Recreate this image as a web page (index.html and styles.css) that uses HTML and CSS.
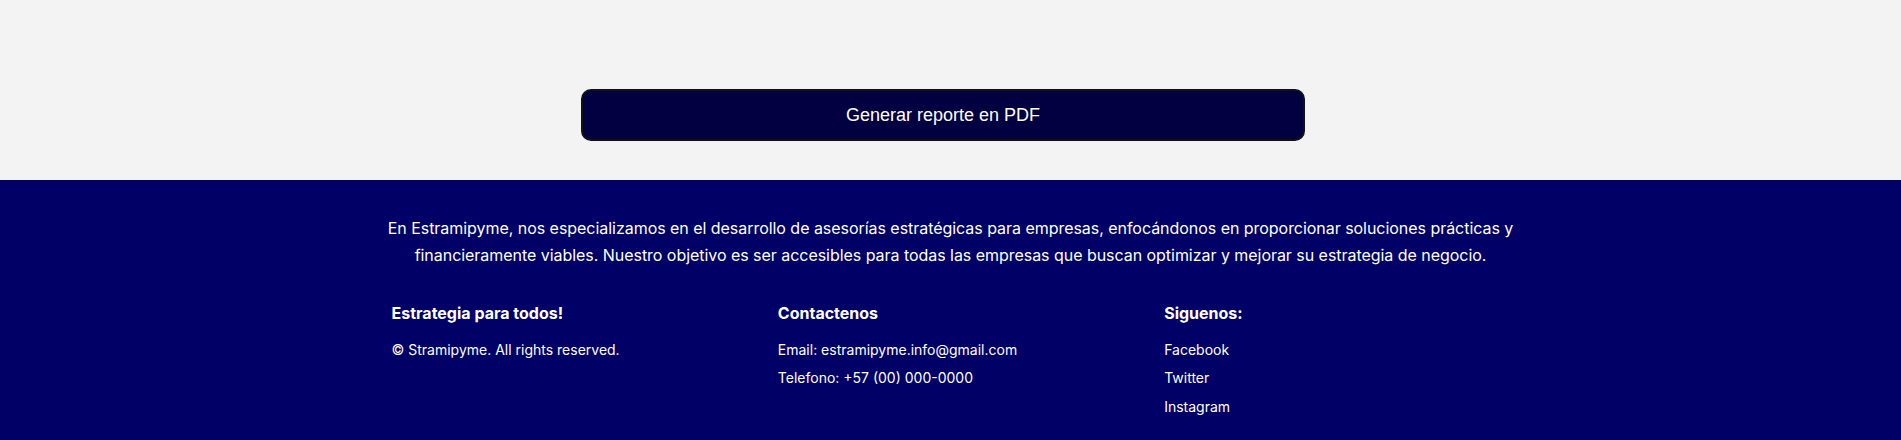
FILE: index.html
```html
<!DOCTYPE html>
<html lang="es">
<head>
<meta charset="utf-8">
<title>Estramipyme</title>
<link rel="stylesheet" href="styles.css">
</head>
<body>
<main class="report">
  <button class="report-btn" type="button">Generar reporte en PDF</button>
</main>
<footer class="footer">
  <div class="footer-inner">
    <p class="footer-about">En Estramipyme, nos especializamos en el desarrollo de asesorías estratégicas para empresas, enfocándonos en proporcionar soluciones prácticas y financieramente viables. Nuestro objetivo es ser accesibles para todas las empresas que buscan optimizar y mejorar su estrategia de negocio.</p>
    <div class="footer-cols">
      <div class="footer-col">
        <h3 class="footer-title">Estrategia para todos!</h3>
        <ul class="footer-list">
          <li>© Stramipyme. All rights reserved.</li>
        </ul>
      </div>
      <div class="footer-col">
        <h3 class="footer-title">Contactenos</h3>
        <ul class="footer-list">
          <li>Email: estramipyme.info@gmail.com</li>
          <li>Telefono: +57 (00) 000-0000</li>
        </ul>
      </div>
      <div class="footer-col">
        <h3 class="footer-title">Siguenos:</h3>
        <ul class="footer-list">
          <li><a href="#">Facebook</a></li>
          <li><a href="#">Twitter</a></li>
          <li><a href="#">Instagram</a></li>
        </ul>
      </div>
    </div>
  </div>
</footer>
</body>
</html>
```
FILE: styles.css
```css
* { box-sizing: border-box; }
html, body { margin: 0; padding: 0; }
body {
  background: #f3f3f3;
  font-family: Inter, "Noto Sans", sans-serif;
}
.report {
  display: flex;
  justify-content: center;
  padding: 89px 15px 39px 0;
}
.report-btn {
  width: 724px;
  height: 52px;
  background: #020040;
  color: #ffffff;
  border: 2px solid #111111;
  border-radius: 10px;
  font-family: "Liberation Sans", Arial, sans-serif;
  font-size: 18px;
  cursor: pointer;
}
.footer {
  background: #000066;
  color: #ffffff;
  padding: 35px 0 40px;
}
.footer-inner {
  width: 1140px;
  margin: 0 auto;
}
.footer-about {
  margin: 0;
  text-align: center;
  font-size: 16px;
  line-height: 27px;
  letter-spacing: -0.04px;
}
.footer-cols {
  display: grid;
  grid-template-columns: repeat(3, 1fr);
  column-gap: 40px;
  padding: 0 10px 0 11px;
  margin-top: 34px;
}
.footer-title {
  margin: 0 0 17.5px;
  font-size: 16px;
  font-weight: 700;
  line-height: 20px;
}
.footer-list {
  list-style: none;
  margin: 0;
  padding: 0;
  display: flex;
  flex-direction: column;
  gap: 10.5px;
}
.footer-list li {
  font-size: 14px;
  line-height: 18px;
}
.footer-list a {
  color: #ffffff;
  text-decoration: none;
}
```
